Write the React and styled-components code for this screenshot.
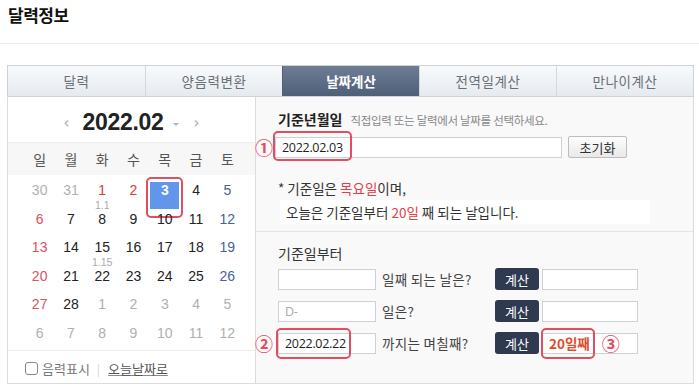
import React from "react";
import styled, { createGlobalStyle, css } from "styled-components";

const Global = createGlobalStyle`
  html, body { margin: 0; padding: 0; background: #fff; }
  body { font-family: "Noto Sans CJK KR", "Noto Sans", sans-serif; color: #333; width: 699px; height: 389px; overflow: hidden; }
  * { box-sizing: border-box; }
`;

const Page = styled.div`
  width: 699px;
`;

const TitleBar = styled.div`
  height: 44px;
  border-bottom: 1px solid #ececec;
  padding: 3px 0 0 8px;
`;

const Title = styled.h1`
  margin: 0;
  font-size: 17px;
  line-height: 24px;
  font-weight: 700;
  color: #111;
  letter-spacing: -0.5px;
`;

const Main = styled.div`
  margin: 21px 5px 0 7px;
`;

const Tabs = styled.div`
  display: grid;
  grid-template-columns: repeat(5, 1fr);
  height: 32px;
  border: 1px solid #cfd3d8;
`;

const Tab = styled.div`
  display: flex;
  align-items: center;
  justify-content: center;
  font-size: 13.5px;
  letter-spacing: 0.6px;
  color: #6a6f75;
  background: linear-gradient(#f8fafc, #e5eaef);
  border-left: 1px solid #d3d8de;
  &:first-child { border-left: none; }
  ${(p) =>
    p.$active &&
    css`
      background: linear-gradient(#6d7d95, #4f5f78);
      color: #fff;
      font-weight: 700;
      letter-spacing: 0;
      border-left-color: #4f5f78;
    `}
`;

const Body = styled.div`
  display: grid;
  grid-template-columns: 249px 1fr;
  height: 287px;
`;

const CalPanel = styled.div`
  border-left: 1px solid #dcdcdc;
  border-bottom: 1px solid #dcdcdc;
  border-right: 1px solid #dcdcdc;
  display: flex;
  flex-direction: column;
`;

const CalHeader = styled.div`
  height: 46px;
  display: flex;
  align-items: center;
  justify-content: center;
  padding-top: 6px;
  border-bottom: 1px solid #eee;
`;

const NavArrow = styled.span`
  color: #aaa;
  font-family: "DejaVu Sans", sans-serif;
  font-size: 15px;
  margin: ${(p) => p.$m};
`;

const MonthText = styled.span`
  font-family: "Liberation Sans", Arial, sans-serif;
  font-size: 23px;
  font-weight: 700;
  color: #222;
  letter-spacing: -0.3px;
`;

const Caret = styled.span`
  width: 0;
  height: 0;
  border-left: 3px solid transparent;
  border-right: 3px solid transparent;
  border-top: 3px solid #b5b5b5;
  margin: 3px 0 0 9px;
`;

const WeekRow = styled.div`
  display: grid;
  grid-template-columns: repeat(7, 1fr);
  height: 32px;
  align-items: center;
  padding: 0 12px 0 16px;
  background: #f7f7f7;
`;

const WeekDay = styled.span`
  text-align: center;
  font-size: 14px;
  color: #555;
`;

const DateGrid = styled.div`
  display: grid;
  grid-template-columns: repeat(7, 1fr);
  grid-auto-rows: 28.6px;
  padding: 2px 12px 0 16px;
  height: 175px;
`;

const Cell = styled.div`
  position: relative;
  display: flex;
  flex-direction: column;
  align-items: center;
  padding-top: 6px;
`;

const dateColors = {
  sun: "#e0505f",
  sat: "#4a5ea0",
  red: "#d93a3a",
  other: "#b0b0b0",
  norm: "#222",
};

const DateNum = styled.span`
  position: relative;
  z-index: 1;
  font-family: "Liberation Sans", Arial, sans-serif;
  font-size: 14px;
  line-height: 15px;
  color: ${(p) => dateColors[p.$tone]};
  ${(p) => p.$sel && css`color: #fff; font-weight: 700;`}
`;

const Lunar = styled.span`
  font-family: "Liberation Sans", Arial, sans-serif;
  font-size: 10.5px;
  line-height: 10px;
  margin-top: 2px;
  color: #aaa;
`;

const SelBox = styled.span`
  position: absolute;
  left: 1px;
  right: 1px;
  top: 5px;
  height: 27px;
  background: #6196ea;
`;

const Mark = styled.span`
  position: absolute;
  border: 2px solid #e34d64;
  border-radius: 5px;
  pointer-events: none;
  ${(p) => css`
    left: ${p.$l}px;
    right: ${p.$r}px;
    top: ${p.$t}px;
    bottom: ${p.$b}px;
  `}
`;

const CalFooter = styled.div`
  flex: 1;
  border-top: 1px solid #eee;
  display: flex;
  align-items: center;
  padding: 3px 0 0 17px;
  font-size: 13px;
  color: #777;
`;

const Check = styled.span`
  width: 13px;
  height: 13px;
  border: 1px solid #888;
  border-radius: 3px;
  margin-right: 4px;
`;

const Sep = styled.span`
  color: #d5d5d5;
  margin: 0 8px 0 7px;
  font-size: 12px;
`;

const TodayLink = styled.span`
  color: #555;
  text-decoration: underline;
  text-decoration-color: #888;
`;

const RightPanel = styled.div`
  background: #f9f9f9;
  border-right: 1px solid #dcdcdc;
  border-bottom: 1px solid #dcdcdc;
  display: flex;
  flex-direction: column;
`;

const TopSection = styled.div`
  height: 135px;
  border-bottom: 1px solid #e4e4e4;
  padding: 12px 0 0 22px;
`;

const Heading = styled.div`
  display: flex;
  align-items: baseline;
  gap: 8px;
  height: 22px;
`;

const HeadStrong = styled.span`
  font-size: 14px;
  font-weight: 700;
  color: #222;
`;

const HeadHint = styled.span`
  font-size: 11.5px;
  color: #888;
  letter-spacing: -0.3px;
`;

const FieldRow = styled.div`
  position: relative;
  display: flex;
  align-items: center;
  gap: 6px;
  margin-top: ${(p) => p.$mt || 0}px;
  height: 22px;
`;

const Num = styled.span`
  position: absolute;
  left: -23px;
  top: 50%;
  transform: translateY(-52%);
  color: #e34d64;
  font-size: 18px;
  font-weight: 700;
  line-height: 1;
`;

const Field = styled.div`
  position: relative;
  width: ${(p) => p.$w}px;
  height: 21px;
  background: #fff;
  border: 1px solid #d0d0d0;
  display: flex;
  align-items: center;
  padding-left: 6px;
  font-family: "Open Sans", "Noto Sans", sans-serif;
  font-size: 12.5px;
  letter-spacing: -0.3px;
  color: ${(p) => (p.$ph ? "#aaa" : "#222")};
  margin-left: ${(p) => p.$ml || 0}px;
`;

const ResetBtn = styled.div`
  width: 59px;
  height: 22px;
  border: 1px solid #bdbdbd;
  border-radius: 2px;
  background: linear-gradient(#fdfdfd, #e9e9e9);
  font-size: 13px;
  color: #333;
  display: flex;
  align-items: center;
  justify-content: center;
`;

const Note = styled.div`
  margin-top: 18px;
  font-size: 13.5px;
  color: #333;
  line-height: 24px;
`;

const NoteLine2 = styled.div`
  display: inline-block;
  background: #fff;
  width: 370px;
  padding-left: 6px;
  margin-left: 2px;
`;

const Red = styled.span`
  color: #e0404a;
`;

const BottomSection = styled.div`
  padding: 11px 0 0 22px;
`;

const SubHead = styled.div`
  font-size: 14px;
  color: #333;
  height: 21px;
  line-height: 21px;
  margin-bottom: 4px;
`;

const Label = styled.span`
  width: 107px;
  font-size: 13.5px;
  color: #444;
  letter-spacing: 0.3px;
`;

const CalcBtn = styled.div`
  width: 44px;
  height: 22px;
  border-radius: 3px;
  background: #2f3950;
  color: #fff;
  font-size: 13px;
  display: flex;
  align-items: center;
  justify-content: center;
  margin-right: -3px;
`;

const ResultText = styled.span`
  color: #e24a2c;
  font-weight: 700;
  font-family: "Noto Sans CJK KR", sans-serif;
  font-size: 13.5px;
  letter-spacing: 0;
`;

const Circled = styled.span`
  color: #e34d64;
  font-size: 18px;
  font-weight: 700;
  margin-left: 12px;
  line-height: 1;
  font-family: "Noto Sans CJK KR", sans-serif;
`;

const weekdays = ["일", "월", "화", "수", "목", "금", "토"];

const days = [
  [["30", "other"], ["31", "other"], ["1", "red", "1.1"], ["2", "red"], ["3", "norm", null, true], ["4", "norm"], ["5", "sat"]],
  [["6", "sun"], ["7", "norm"], ["8", "norm"], ["9", "norm"], ["10", "norm"], ["11", "norm"], ["12", "sat"]],
  [["13", "sun"], ["14", "norm"], ["15", "norm", "1.15"], ["16", "norm"], ["17", "norm"], ["18", "norm"], ["19", "sat"]],
  [["20", "sun"], ["21", "norm"], ["22", "norm"], ["23", "norm"], ["24", "norm"], ["25", "norm"], ["26", "sat"]],
  [["27", "sun"], ["28", "norm"], ["1", "other"], ["2", "other"], ["3", "other"], ["4", "other"], ["5", "other"]],
  [["6", "other"], ["7", "other"], ["8", "other"], ["9", "other"], ["10", "other"], ["11", "other"], ["12", "other"]],
];

export default function App() {
  return (
    <Page>
      <Global />
      <TitleBar>
        <Title>달력정보</Title>
      </TitleBar>
      <Main>
        <Tabs>
          <Tab>달력</Tab>
          <Tab>양음력변환</Tab>
          <Tab $active>날짜계산</Tab>
          <Tab>전역일계산</Tab>
          <Tab>만나이계산</Tab>
        </Tabs>
        <Body>
          <CalPanel>
            <CalHeader>
              <NavArrow $m="0 13px 0 0">‹</NavArrow>
              <MonthText>2022.02</MonthText>
              <Caret />
              <NavArrow $m="0 0 0 15px">›</NavArrow>
            </CalHeader>
            <WeekRow>
              {weekdays.map((w) => (
                <WeekDay key={w}>{w}</WeekDay>
              ))}
            </WeekRow>
            <DateGrid>
              {days.flat().map(([n, tone, lunar, sel], i) => (
                <Cell key={i}>
                  {sel && <SelBox />}
                  {sel && <Mark $l={-3} $r={-3} $t={0} $b={-12} />}
                  <DateNum $tone={tone} $sel={sel}>
                    {n}
                  </DateNum>
                  {lunar && <Lunar>{lunar}</Lunar>}
                </Cell>
              ))}
            </DateGrid>
            <CalFooter>
              <Check />
              음력표시
              <Sep>|</Sep>
              <TodayLink>오늘날짜로</TodayLink>
            </CalFooter>
          </CalPanel>
          <RightPanel>
            <TopSection>
              <Heading>
                <HeadStrong>기준년월일</HeadStrong>
                <HeadHint>직접입력 또는 달력에서 날짜를 선택하세요.</HeadHint>
              </Heading>
              <FieldRow $mt={5}>
                <Num>①</Num>
                <Field $w={287} $ml={-3}>
                  2022.02.03
                  <Mark $l={-3} $r={209} $t={-7} $b={-4} />
                </Field>
                <ResetBtn>초기화</ResetBtn>
              </FieldRow>
              <Note>
                <div>* 기준일은 <Red>목요일</Red>이며,</div>
                <NoteLine2>
                  오늘은 기준일부터 <Red>20일</Red> 째 되는 날입니다.
                </NoteLine2>
              </Note>
            </TopSection>
            <BottomSection>
              <SubHead>기준일부터</SubHead>
              <FieldRow>
                <Field $w={98} />
                <Label>일째 되는 날은?</Label>
                <CalcBtn>계산</CalcBtn>
                <Field $w={96} />
              </FieldRow>
              <FieldRow $mt={10}>
                <Field $w={98} $ph>D-</Field>
                <Label>일은?</Label>
                <CalcBtn>계산</CalcBtn>
                <Field $w={96} />
              </FieldRow>
              <FieldRow $mt={10}>
                <Num>②</Num>
                <Field $w={98}>
                  2022.02.22
                  <Mark $l={-3} $r={24} $t={-6} $b={-6} />
                </Field>
                <Label>까지는 며칠째?</Label>
                <CalcBtn>계산</CalcBtn>
                <Field $w={96}>
                  <ResultText>20일째</ResultText>
                  <Circled>③</Circled>
                  <Mark $l={-2} $r={42} $t={-6} $b={-6} />
                </Field>
              </FieldRow>
            </BottomSection>
          </RightPanel>
        </Body>
      </Main>
    </Page>
  );
}
